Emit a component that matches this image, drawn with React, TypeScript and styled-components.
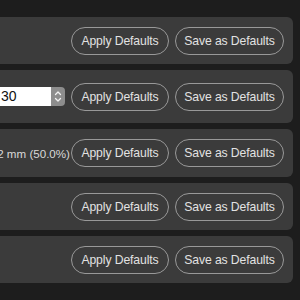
import styled, { createGlobalStyle } from "styled-components";

const Global = createGlobalStyle`
  html, body {
    margin: 0;
    padding: 0;
    background: #1d1d1d;
    overflow: hidden;
  }
  body {
    font-family: "Liberation Sans", Arial, sans-serif;
  }
`;

const Page = styled.div`
  width: 300px;
  height: 300px;
  padding: 17px 7px 0 0;
  box-sizing: border-box;
  overflow: hidden;
`;

const List = styled.div`
  display: flex;
  flex-direction: column;
  gap: 6px;
  margin-left: -10px;
`;

const Panel = styled.div<{ h: number }>`
  display: flex;
  align-items: center;
  justify-content: flex-end;
  gap: 6px;
  height: ${({ h }) => h}px;
  padding-right: 9px;
  background: #3b3b3b;
  border-radius: 6px;
  overflow: hidden;
`;

const PillButton = styled.button<{ w: number }>`
  flex-shrink: 0;
  width: ${({ w }) => w}px;
  height: 28px;
  padding: 0;
  background: transparent;
  border: 1.5px solid #999999;
  border-radius: 14px;
  color: #e2e2e2;
  font-family: "Liberation Sans", Arial, sans-serif;
  font-size: 12.2px;
  letter-spacing: -0.1px;
  text-align: center;
  white-space: nowrap;
`;

const Label = styled.span`
  flex-shrink: 0;
  margin-right: -5px;
  color: #d8d8d8;
  font-size: 11.6px;
  white-space: nowrap;
`;

const NumberField = styled.div`
  flex-shrink: 0;
  display: flex;
  height: 19px;
`;

const FieldInput = styled.div`
  width: 56px;
  background: #ffffff;
  color: #111;
  font-size: 14px;
  line-height: 19px;
  padding-left: 6px;
  box-sizing: border-box;
`;

const Stepper = styled.div`
  width: 14px;
  background: #8d8d8d;
  border-radius: 0 4px 4px 0;
  display: flex;
  align-items: center;
  justify-content: center;
`;

function Buttons() {
  return (
    <>
      <PillButton w={98}>Apply Defaults</PillButton>
      <PillButton w={109}>Save as Defaults</PillButton>
    </>
  );
}

export default function App() {
  return (
    <Page>
      <Global />
      <List>
        <Panel h={47}>
          <Buttons />
        </Panel>
        <Panel h={53}>
          <NumberField>
            <FieldInput>30</FieldInput>
            <Stepper>
              <svg width="8" height="13" viewBox="0 0 8 13" fill="none">
                <path d="M1.5 4.5 L4 2 L6.5 4.5" stroke="#f2f2f2" strokeWidth="1.3" strokeLinecap="round" strokeLinejoin="round" />
                <path d="M1.5 8.5 L4 11 L6.5 8.5" stroke="#f2f2f2" strokeWidth="1.3" strokeLinecap="round" strokeLinejoin="round" />
              </svg>
            </Stepper>
          </NumberField>
          <Buttons />
        </Panel>
        <Panel h={48}>
          <Label>1.2 mm (50.0%)</Label>
          <Buttons />
        </Panel>
        <Panel h={47}>
          <Buttons />
        </Panel>
        <Panel h={47}>
          <Buttons />
        </Panel>
      </List>
    </Page>
  );
}
